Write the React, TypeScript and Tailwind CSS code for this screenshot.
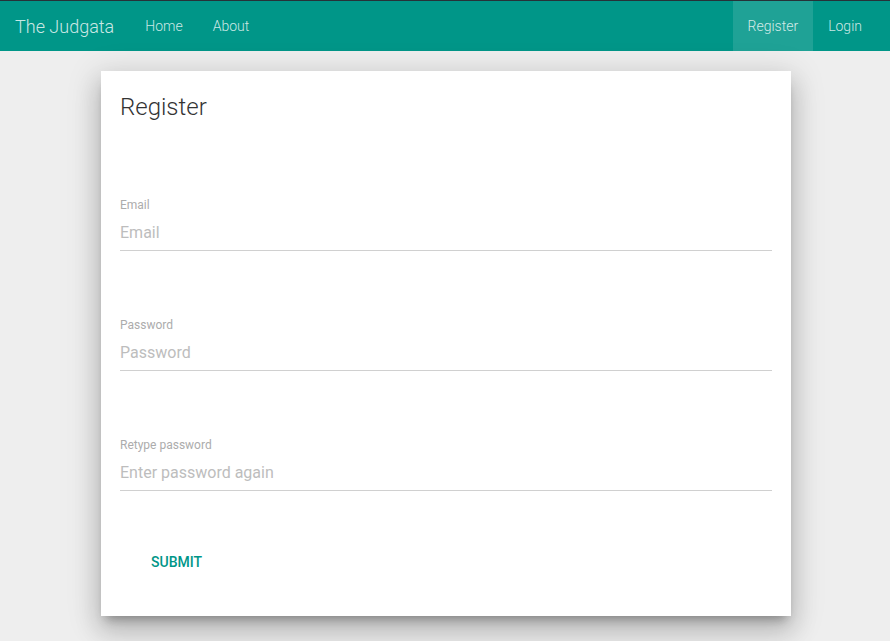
import { useState } from 'react'

const links = ['Home', 'About']

function Field({ label, placeholder, type = 'text' }: { label: string; placeholder: string; type?: string }) {
  const [value, setValue] = useState('')
  return (
    <div className="flex flex-col">
      <label className="text-[12px] leading-[16px] text-[#acacac]">{label}</label>
      <input
        type={type}
        value={value}
        onChange={(e) => setValue(e.target.value)}
        placeholder={placeholder}
        className="mt-[2px] h-[36px] w-full border-b border-[#d0d0d0] bg-transparent text-[16px] text-[#444] outline-none placeholder:text-[#bdbdbd]"
      />
    </div>
  )
}

export default function App() {
  return (
    <div className="min-h-[641px] bg-[#eeeeee] font-['Roboto',sans-serif]">
      <nav className="flex h-[51px] items-stretch border-t border-[#263238] bg-[#009688] text-[rgba(255,255,255,0.8)]">
        <a className="flex items-center pl-[15px] text-[18px] font-light">The Judgata</a>
        <ul className="ml-[16px] flex items-stretch">
          {links.map((l) => (
            <li key={l} className="flex items-center px-[15px] text-[14px] font-light">
              {l}
            </li>
          ))}
        </ul>
        <ul className="ml-auto flex items-stretch pr-[13px]">
          <li className="flex items-center bg-[rgba(255,255,255,0.12)] px-[15px] text-[14px] font-light">Register</li>
          <li className="flex items-center px-[15px] text-[14px] font-light">Login</li>
        </ul>
      </nav>

      <div className="pt-[20px]">
        <div className="mx-auto w-[690px] translate-x-px bg-white px-[19px] pb-[36px] pt-[20px] shadow-[0_16px_24px_2px_rgba(0,0,0,0.14),0_6px_30px_5px_rgba(0,0,0,0.12),0_8px_10px_-5px_rgba(0,0,0,0.3)]">
          <h1 className="text-[24px] font-light leading-[33px] text-[#333]">Register</h1>
          <form className="mt-[73px] flex flex-col gap-[66px]">
            <Field label="Email" placeholder="Email" type="email" />
            <Field label="Password" placeholder="Password" type="password" />
            <Field label="Retype password" placeholder="Enter password again" type="password" />
          </form>
          <button
            type="button"
            className="mt-[53px] h-[36px] pl-[31px] pr-[32px] text-[14px] font-medium uppercase text-[#009688]"
          >
            Submit
          </button>
        </div>
      </div>
    </div>
  )
}
